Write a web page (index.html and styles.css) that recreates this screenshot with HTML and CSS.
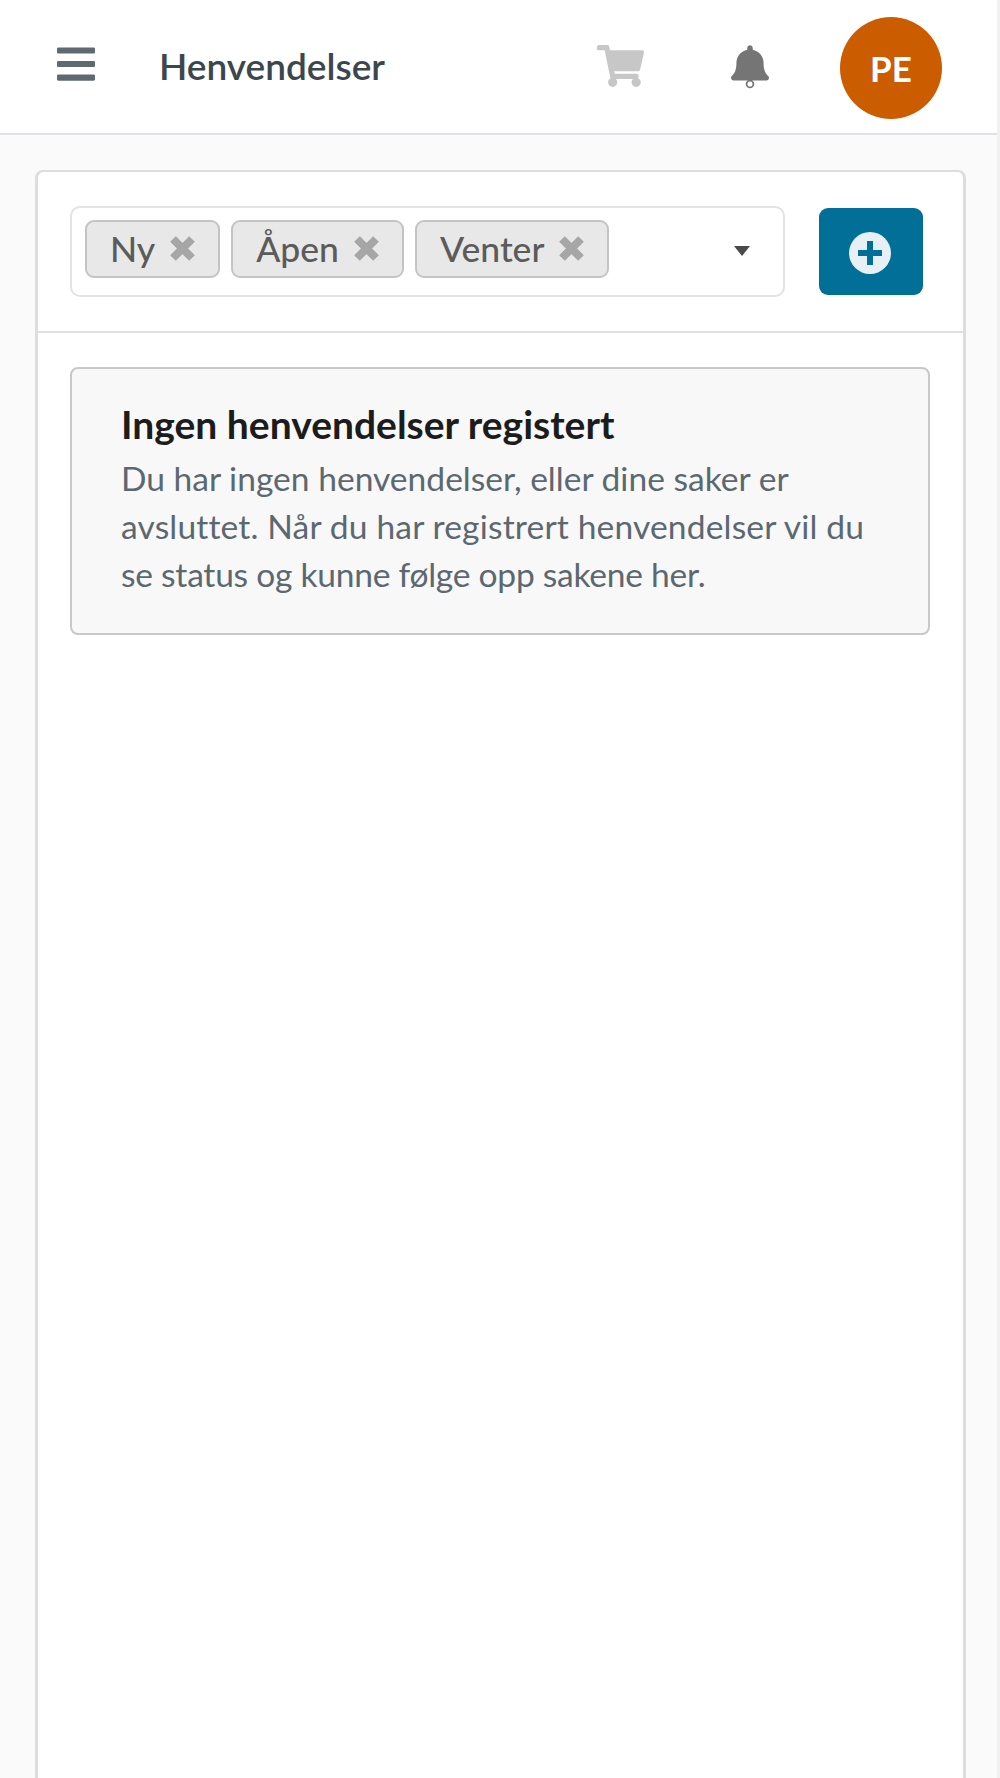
FILE: index.html
```html
<!DOCTYPE html>
<html lang="no">
<head>
<meta charset="utf-8">
<title>Henvendelser</title>
<link rel="stylesheet" href="styles.css">
</head>
<body>
<div class="page">
  <header class="topbar">
    <svg class="icon-bars" viewBox="0 0 448 512"><path d="M16 132h416c8.837 0 16-7.163 16-16V76c0-8.837-7.163-16-16-16H16C7.163 60 0 67.163 0 76v40c0 8.837 7.163 16 16 16zm0 160h416c8.837 0 16-7.163 16-16v-40c0-8.837-7.163-16-16-16H16c-8.837 0-16 7.163-16 16v40c0 8.837 7.163 16 16 16zm0 160h416c8.837 0 16-7.163 16-16v-40c0-8.837-7.163-16-16-16H16c-8.837 0-16 7.163-16 16v40c0 8.837 7.163 16 16 16z"/></svg>
    <h1 class="title">Henvendelser</h1>
    <svg class="icon-cart" viewBox="0 0 576 512"><path d="M528.12 301.319l47.273-208C578.806 78.301 567.391 64 551.99 64H159.208l-9.166-44.81C147.758 8.021 137.93 0 126.529 0H24C10.745 0 0 10.745 0 24v16c0 13.255 10.745 24 24 24h69.883l70.248 343.435C147.325 417.1 136 435.222 136 456c0 30.928 25.072 56 56 56s56-25.072 56-56c0-15.674-6.447-29.835-16.824-40h209.647C430.447 426.165 424 440.326 424 456c0 30.928 25.072 56 56 56s56-25.072 56-56c0-22.172-12.888-41.332-31.579-50.405l5.517-24.276c3.413-15.018-8.002-29.319-23.403-29.319H218.117l-6.545-32h293.145c11.206 0 20.92-7.754 23.403-18.681z"/></svg>
    <svg class="icon-bell" viewBox="0 0 448 512"><path d="M224 0c-17.66 0-31.98 14.33-31.98 32v20.84C118.56 68.1 64.08 130.3 64.08 208c0 102.3-36.15 133.53-55.47 154.29-6 6.45-8.66 14.16-8.61 21.71.11 16.4 12.98 32 32.1 32h383.8c19.12 0 32-15.6 32.1-32 .05-7.55-2.61-15.27-8.61-21.71-19.32-20.76-55.47-51.99-55.47-154.29 0-77.7-54.48-139.9-127.94-155.16V32c0-17.67-14.32-32-31.98-32z"/><circle class="clapper" cx="224" cy="456" r="40"/></svg>
    <div class="avatar">PE</div>
  </header>
  <main class="content">
    <section class="card">
      <div class="filters">
        <div class="select">
          <span class="tag">Ny<svg class="tag-x" viewBox="0 0 25 25"><path d="M3 3l19 19M22 3L3 22"/></svg></span>
          <span class="tag">Åpen<svg class="tag-x" viewBox="0 0 25 25"><path d="M3 3l19 19M22 3L3 22"/></svg></span>
          <span class="tag">Venter<svg class="tag-x" viewBox="0 0 25 25"><path d="M3 3l19 19M22 3L3 22"/></svg></span>
          <span class="caret"></span>
        </div>
        <button class="add" type="button" aria-label="Ny henvendelse">
          <svg class="icon-plus" viewBox="0 0 42 42"><circle cx="21" cy="21" r="21"/><path class="plus" d="M18 9h6v9h9v6h-9v9h-6v-9H9v-6h9z"/></svg>
        </button>
      </div>
      <div class="body">
        <div class="notice">
          <h2 class="notice-title">Ingen henvendelser registert</h2>
          <p class="notice-text"><span class="line">Du har ingen henvendelser, eller dine saker er</span> <span class="line line-wide">avsluttet. Når du har registrert henvendelser vil du</span> <span class="line line-tight">se status og kunne følge opp sakene her.</span></p>
        </div>
      </div>
    </section>
  </main>
</div>
</body>
</html>
```
FILE: styles.css
```css
* { box-sizing: border-box; }
html, body { margin: 0; padding: 0; height: 100%; overflow: hidden; }
body { font-family: Lato, "Open Sans", sans-serif; background: #fafafa; }
.page { height: 1778px; overflow: hidden; border-right: 3px solid #f1f1f1; display: flex; flex-direction: column; }
.topbar { height: 135px; flex: none; background: #fff; border-bottom: 2px solid #dfe2e6; display: flex; align-items: center; padding: 0 0 0 57px; }
.icon-bars { width: 38px; height: 44px; fill: #5f6a70; flex: none; margin-top: -6px; }
.title { margin: -3px 0 0 64px; font-size: 37px; font-weight: 600; color: #3c474d; flex: none; width: 438px; }
.icon-cart { width: 47px; height: 42px; fill: #c7c7c7; margin-top: -1px; flex: none; }
.icon-bell { width: 38px; height: 44px; fill: #757575; margin-left: 87px; flex: none; overflow: visible; }
.clapper { fill: none; stroke: #757575; stroke-width: 20; }
.avatar { width: 102px; height: 102px; margin: 2px 0 0 71px; border-radius: 50%; background: #cb5c00; color: #fff; display: flex; align-items: center; justify-content: center; font-size: 35px; font-weight: 700; flex: none; }
.content { flex: 1; padding: 35px 31px 0 35px; }
.card { background: #fff; border: 3px solid #ddd; border-top-width: 2px; border-radius: 8px; height: 1700px; }
.filters { display: flex; align-items: center; height: 161px; padding: 0 33px 0 32px; border-bottom: 2px solid #e0e0e0; }
.select { width: 715px; height: 91px; border: 2px solid #e3e3e3; border-radius: 10px; display: flex; align-items: center; gap: 11px; padding: 0 0 6px 13px; position: relative; flex: none; }
.tag { height: 58px; display: flex; align-items: center; background: #e8e8e8; border: 2px solid #c4c4c4; border-radius: 9px; padding: 0 23px; font-size: 35.5px; font-weight: 500; color: #5b5b5b; }
.tag-x { width: 25px; height: 25px; stroke: #a6a6a6; stroke-width: 8; fill: none; margin-left: 15px; flex: none; }
.caret { position: absolute; right: 33px; top: 38px; border: 8.5px solid transparent; border-top: 10px solid #4a4a4a; border-bottom: 0; }
.add { width: 104px; height: 87px; margin-left: 34px; border: 0; border-radius: 9px; background: #026f98; display: flex; align-items: center; justify-content: center; padding: 3px 2px 0 0; flex: none; }
.icon-plus { width: 42px; height: 42px; fill: #e6f0f5; }
.plus { fill: #026f98; }
.body { padding: 34px 33px 34px 32px; }
.notice { background: #f8f8f8; border: 2px solid #c8c8c8; border-radius: 8px; height: 268px; padding: 25px 40px 0 49px; }
.notice-title { margin: 0; font-size: 39px; font-weight: 700; line-height: 60px; color: #1c1c1c; }
.notice-text { margin: 0; font-size: 33.6px; line-height: 48px; color: #5c6870; }
.line { display: block; }
.line-wide { letter-spacing: 0.15px; }
.line-tight { letter-spacing: -0.26px; }
```
